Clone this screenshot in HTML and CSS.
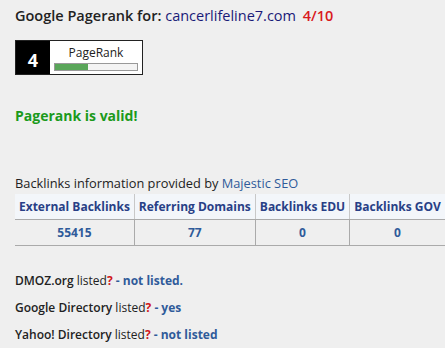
FILE: index.html
```html
<!DOCTYPE html>
<html lang="en">
<head>
    <meta charset="UTF-8">
    <title>Google Pagerank</title>
    <link rel="stylesheet" href="styles.css">
</head>
<body>
    <div id="wrapper">
        <h1 class="title">Google Pagerank for: <span class="domain">cancerlifeline7.com</span> <span class="score">4/10</span></h1>

        <!-- PageRank badge -->
        <div class="badge">
            <div class="badge-num">4</div>
            <div class="badge-body">
                <div class="badge-label">PageRank</div>
                <div class="badge-bar"><div class="badge-fill" style="width: 40%"></div></div>
            </div>
        </div>

        <p class="valid">Pagerank is valid!</p>

        <p class="provider">Backlinks information provided by <a href="#">Majestic SEO</a></p>
        <table class="links">
            <tr>
                <th>External Backlinks</th>
                <th>Referring Domains</th>
                <th>Backlinks EDU</th>
                <th>Backlinks GOV</th>
            </tr>
            <tr>
                <td>55415</td>
                <td>77</td>
                <td>0</td>
                <td>0</td>
            </tr>
        </table>

        <ul class="dirs">
            <li><b>DMOZ.org</b> listed<span class="q">?</span> <a href="#">- not listed.</a></li>
            <li><b>Google Directory</b> listed<span class="q">?</span> <a href="#">- yes</a></li>
            <li><b>Yahoo! Directory</b> listed<span class="q">?</span> <a href="#">- not listed</a></li>
        </ul>
    </div>
</body>
</html>
```

FILE: styles.css
```css
* {
    box-sizing: border-box;
    margin: 0;
    padding: 0;
}

body {
    font-family: "Open Sans", "Noto Sans", sans-serif;
    background: #efefef;
    color: #222;
    overflow: hidden;
}

#wrapper {
    padding: 5px 0 0 15px;
    width: 520px;
}

a {
    color: #2f5b9a;
    text-decoration: none;
}

.title {
    font-size: 14.5px;
    font-weight: 600;
    line-height: 21px;
}

.domain {
    color: #1a1a78;
    font-weight: 500;
}

.score {
    color: #d9191c;
    margin-left: 3px;
}

/* PageRank badge */
.badge {
    display: flex;
    width: 128px;
    height: 35px;
    margin-top: 14px;
    border: 1px solid #222;
    background: #fff;
}

.badge-num {
    width: 34px;
    background: #000;
    color: #fff;
    font-size: 18px;
    font-weight: 700;
    display: flex;
    align-items: center;
    justify-content: center;
    padding-top: 5px;
}

.badge-body {
    flex: 1;
    padding: 4px 4px 0 4px;
    display: flex;
    flex-direction: column;
    align-items: center;
}

.badge-label {
    font-size: 12px;
    line-height: 15px;
    color: #222;
}

.badge-bar {
    width: 84px;
    height: 8px;
    margin-top: 3px;
    border: 1px solid #999;
    background: #f4f4f4;
}

.badge-fill {
    height: 100%;
    background: #5aa65a;
}

.valid {
    margin-top: 31px;
    color: #1b9a1b;
    font-size: 14px;
    font-weight: 700;
}

.provider {
    margin-top: 50px;
    font-size: 12.8px;
    line-height: 17px;
}

/* Backlinks table */
.links {
    border-collapse: collapse;
    font-size: 12px;
    font-weight: 700;
    margin-top: 2px;
}

.links th {
    color: #283f86;
    background: #f3f6fa;
    height: 25px;
    padding: 0 4px;
    border-left: 1px solid #c8c8c8;
    border-bottom: 1px solid #aaa;
    white-space: nowrap;
}

.links td {
    color: #2f5b9a;
    text-align: center;
    height: 26px;
    border-left: 1px solid #aaa;
    border-bottom: 1px solid #aaa;
}

.links th:first-child,
.links td:first-child {
    border-left: none;
}

.dirs {
    list-style: none;
    margin-top: 21px;
    font-size: 12px;
}

.dirs li {
    line-height: 27px;
}

.dirs b {
    font-weight: 600;
}

.dirs .q {
    color: #d0151a;
    font-weight: 700;
}

.dirs a {
    font-weight: 700;
}
```
